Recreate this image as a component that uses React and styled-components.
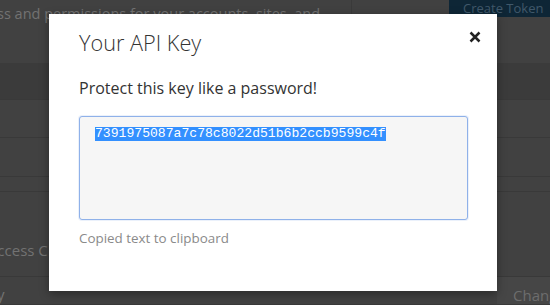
import React from "react";
import styled, { createGlobalStyle } from "styled-components";

const Global = createGlobalStyle`
  html, body { margin: 0; padding: 0; }
  body {
    width: 550px; height: 305px; overflow: hidden;
    background: #414141;
    font-family: "Open Sans", "Noto Sans", sans-serif;
  }
  #root { width: 550px; height: 305px; position: relative; overflow: hidden; }
`;

const Page = styled.div`
  width: 550px;
  height: 305px;
  display: flex;
  flex-direction: column;
  background: #414141;
  color: #6f6f6f;
  font-size: 15px;
`;

const Header = styled.div`
  height: 63px;
  display: grid;
  grid-template-columns: 351px 98px 101px;
  align-items: start;
`;

const Intro = styled.div`
  margin-left: -3px;
  padding-top: 3px;
  white-space: nowrap;
  line-height: 22px;
  font-size: 14.5px;
  color: #727272;
`;

const Divider = styled.div`
  height: 63px;
  border-left: 1px solid #3a3a3a;
`;

const TokenButton = styled.div`
  height: 17px;
  background: #0e2636;
  color: #40586a;
  font-size: 13px;
  line-height: 16px;
  padding-left: 14px;
  white-space: nowrap;
`;

const Band = styled.div`
  height: ${(p) => p.$h}px;
  background: ${(p) => p.$bg || "#414141"};
  border-bottom: 1px solid #393939;
  box-sizing: border-box;
  display: flex;
  align-items: ${(p) => p.$align || "center"};
  justify-content: space-between;
  white-space: nowrap;
  overflow: hidden;
`;

const RowText = styled.span`
  margin-left: ${(p) => p.$indent}px;
  color: #727272;
  font-size: 15px;
  padding-top: ${(p) => p.$pt || 0}px;
  padding-bottom: ${(p) => p.$pb || 0}px;
`;

const ChangeCell = styled.span`
  width: 37px;
  padding-left: 16px;
  background: #464646;
  color: #6d6d6d;
  align-self: stretch;
  display: flex;
  align-items: flex-end;
  line-height: 18px;
`;

const Modal = styled.div`
  position: absolute;
  left: 49px;
  top: 14px;
  width: 448px;
  height: 277px;
  background: #fff;
  box-sizing: border-box;
  padding: 0 29px 0 30px;
  display: flex;
  flex-direction: column;
  box-shadow: 0 3px 9px rgba(0, 0, 0, 0.35);
`;

const ModalHead = styled.div`
  display: flex;
  justify-content: space-between;
  align-items: flex-start;
  padding-top: 14px;
  height: 50px;
  box-sizing: border-box;
`;

const Title = styled.h2`
  margin: 0;
  font-family: "Open Sans", sans-serif;
  font-weight: 300;
  font-size: 21.7px;
  line-height: 30px;
  color: #333;
`;

const Close = styled.button`
  border: 0;
  background: none;
  padding: 0;
  margin: 1px -15px 0 0;
  width: 16px;
  height: 16px;
  display: flex;
  align-items: center;
  justify-content: center;
`;

const Lead = styled.p`
  margin: 14px 0 0;
  font-size: 16px;
  line-height: 20px;
  color: #333;
`;

const KeyBox = styled.div`
  margin-top: 18px;
  width: 389px;
  height: 104px;
  box-sizing: border-box;
  border: 1px solid #8fb1e9;
  border-radius: 3px;
  background: #f6f6f6;
  padding: 10px 15px;
  font-size: 13px;
  line-height: 14px;
  box-shadow: 0 0 0 1px rgba(120, 160, 230, 0.15);
`;

const Selected = styled.span`
  font-family: "Liberation Mono", "Courier New", monospace;
  font-size: 13.1px;
  line-height: 14px;
  background: #3390ff;
  color: #fff;
  display: inline-block;
  vertical-align: top;
`;

const Hint = styled.div`
  margin-top: 9px;
  font-size: 13.4px;
  line-height: 18px;
  color: #8a8a8a;
`;

export default function App() {
  return (
    <>
      <Global />
      <Page>
        <Header>
          <Intro>ss and permissions for your accounts, sites, and</Intro>
          <Divider />
          <TokenButton>Create Token</TokenButton>
        </Header>
        <Band $h={37} $bg="#3b3b3b" />
        <Band $h={38}>
          <RowText $indent={-7} $pt={2}>s</RowText>
        </Band>
        <Band $h={39} />
        <Band $h={15} />
        <Band $h={85} $align="flex-end">
          <RowText $indent={-11} $pb={16}>access C</RowText>
        </Band>
        <Band $h={28} $align="flex-end">
          <RowText $indent={-3} $pb={0}>y</RowText>
          <ChangeCell>Change</ChangeCell>
        </Band>
      </Page>
      <Modal>
        <ModalHead>
          <Title>Your API Key</Title>
          <Close aria-label="Close">
            <svg width="12" height="12" viewBox="0 0 12 12">
              <path d="M1.5 1.5 L10.5 10.5 M10.5 1.5 L1.5 10.5" stroke="#222" strokeWidth="2.5" strokeLinecap="butt" />
            </svg>
          </Close>
        </ModalHead>
        <Lead>Protect this key like a password!</Lead>
        <KeyBox>
          <Selected>7391975087a7c78c8022d51b6b2ccb9599c4f</Selected>
        </KeyBox>
        <Hint>Copied text to clipboard</Hint>
      </Modal>
    </>
  );
}
